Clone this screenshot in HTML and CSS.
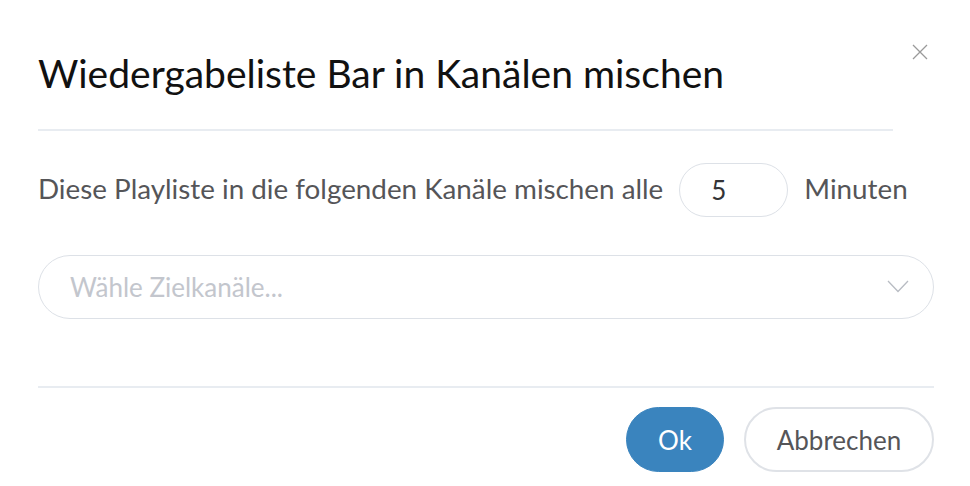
FILE: index.html
```html
<!DOCTYPE html>
<html lang="de">
<head>
<meta charset="utf-8">
<title>Wiedergabeliste mischen</title>
<link rel="stylesheet" href="styles.css">
</head>
<body>
<div class="modal">
  <div class="modal-header">
    <h1 class="modal-title">Wiedergabeliste Bar in Kanälen mischen</h1>
    <button class="close" aria-label="Schließen">
      <svg width="16" height="16" viewBox="0 0 16 16"><path d="M1 1 L15 15 M15 1 L1 15" stroke="#9a9a9a" stroke-width="1.3" fill="none"/></svg>
    </button>
  </div>
  <div class="modal-body">
    <div class="interval-row">
      <span class="label">Diese Playliste in die folgenden Kanäle mischen alle</span>
      <input class="minutes" type="text" value="5">
      <span class="label">Minuten</span>
    </div>
    <div class="select">
      <span class="placeholder">Wähle Zielkanäle...</span>
      <svg class="chevron" width="22" height="13" viewBox="0 0 22 13"><path d="M1 1 L11 11.5 L21 1" stroke="#b8bcc3" stroke-width="1.3" fill="none"/></svg>
    </div>
  </div>
  <div class="modal-footer">
    <button class="btn btn-primary">Ok</button>
    <button class="btn btn-default">Abbrechen</button>
  </div>
</div>
</body>
</html>
```
FILE: styles.css
```css
html, body {
  margin: 0;
  padding: 0;
  background: #ffffff;
}
body {
  font-family: Lato, "Open Sans", sans-serif;
  color: #555558;
}
.modal {
  position: relative;
  padding: 0 36px 0 38px;
}
.modal-header {
  padding-top: 50px;
  margin-right: 41px;
}
.modal-title {
  margin: 0;
  font-size: 39px;
  line-height: 47px;
  font-weight: 400;
  color: #111111;
  padding-bottom: 32px;
  border-bottom: 2px solid #e8ecf1;
}
.close {
  position: absolute;
  top: 44px;
  right: 42px;
  width: 16px;
  height: 16px;
  padding: 0;
  border: none;
  background: none;
  cursor: pointer;
}
.close svg { display: block; }
.modal-body {
  padding-top: 32px;
}
.interval-row {
  display: flex;
  align-items: center;
  gap: 16px;
}
.label {
  font-size: 27.8px;
  line-height: 32px;
  margin-top: -2px;
  color: #555558;
}
.minutes {
  box-sizing: border-box;
  width: 109px;
  height: 54px;
  border: 1px solid #dde1e7;
  border-radius: 27px;
  font-family: inherit;
  font-size: 26px;
  color: #333336;
  text-align: left;
  padding: 0 0 0 31px;
  outline: none;
}
.select {
  box-sizing: border-box;
  margin-top: 38px;
  height: 64px;
  border: 1px solid #dde1e7;
  border-radius: 32px;
  display: flex;
  align-items: center;
  justify-content: space-between;
  padding: 0 24px 0 31px;
}
.placeholder {
  font-size: 26px;
  color: #c3c6cd;
}
.chevron { display: block; margin-top: -2px; }
.modal-footer {
  margin-top: 67px;
  border-top: 2px solid #e8ecf1;
  padding-top: 19px;
  display: flex;
  justify-content: flex-end;
  gap: 20px;
}
.btn {
  box-sizing: border-box;
  height: 65px;
  border-radius: 33px;
  font-family: inherit;
  font-size: 26px;
  cursor: pointer;
}
.btn-primary {
  width: 98px;
  background: #3a84be;
  border: 1px solid #3a84be;
  color: #ffffff;
}
.btn-default {
  width: 190px;
  background: #ffffff;
  border: 2px solid #dfe2e7;
  color: #555558;
}
```
